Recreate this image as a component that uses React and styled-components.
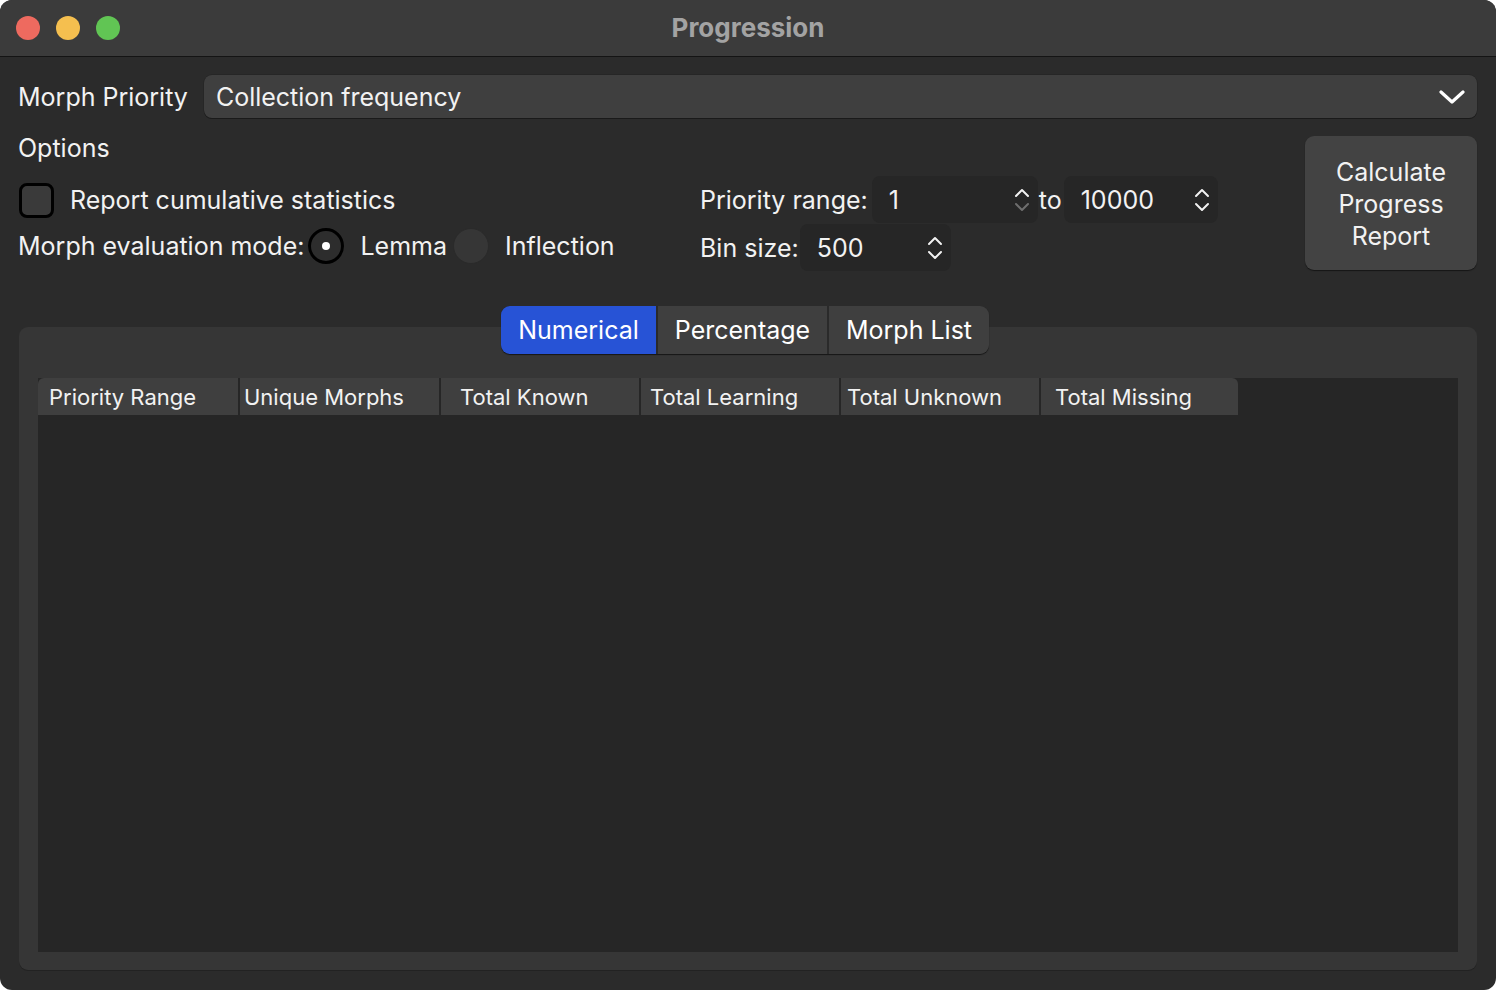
import * as React from "react";
import styled, { createGlobalStyle } from "styled-components";

const Global = createGlobalStyle`
  html, body {
    margin: 0;
    padding: 0;
    background: #ffffff;
  }
  * { box-sizing: border-box; }
`;

const Window = styled.div`
  width: 1496px;
  height: 990px;
  border-radius: 12px;
  overflow: hidden;
  background: #2b2b2b;
  display: flex;
  flex-direction: column;
  font-family: Inter, "Liberation Sans", sans-serif;
  color: #f2f2f2;
  font-size: 25px;
`;

const TitleBar = styled.div`
  height: 57px;
  flex: none;
  background: #3b3b3b;
  border-bottom: 1px solid #141414;
  display: grid;
  grid-template-columns: 1fr auto 1fr;
  align-items: center;
  padding: 0 16px;
`;

const Lights = styled.div`
  display: flex;
  gap: 16px;
`;

const Light = styled.span`
  width: 24px;
  height: 24px;
  border-radius: 50%;
  background: ${(p) => p.color};
`;

const Title = styled.div`
  font-weight: 700;
  font-size: 26px;
  color: #a3a3a3;
  padding-bottom: 2px;
`;

const Body = styled.div`
  flex: 1;
  display: flex;
  flex-direction: column;
  padding: 18px 19px 20px 18px;
`;

const PriorityRow = styled.div`
  display: flex;
  align-items: center;
  gap: 16px;
`;

const Label = styled.span`
  white-space: nowrap;
  line-height: 32px;
`;

const Dropdown = styled.div`
  flex: 1;
  height: 43px;
  background: #3f3f3f;
  border-radius: 8px;
  box-shadow: 0 1px 0 #1a1a1a, 0 0 0 0.5px #222;
  display: flex;
  align-items: center;
  justify-content: space-between;
  padding: 0 12px 0 12px;
`;

const OptionsArea = styled.div`
  display: flex;
  margin-top: 14px;
`;

const LeftCol = styled.div`
  width: 682px;
  display: flex;
  flex-direction: column;
`;

const CheckRow = styled.div`
  display: flex;
  align-items: center;
  margin-top: 19px;
  height: 34px;
  gap: 16px;
`;

const Checkbox = styled.span`
  width: 35px;
  height: 35px;
  border-radius: 8px;
  border: 3px solid #000;
  background: #3a3a3a;
  margin-left: 1px;
`;

const RadioRow = styled.div`
  display: flex;
  align-items: center;
  margin-top: 11px;
  height: 36px;
`;

const Radio = styled.span`
  width: 36px;
  height: 36px;
  border-radius: 50%;
  flex: none;
  display: flex;
  align-items: center;
  justify-content: center;
  background: ${(p) => (p.checked ? "#2d2d2d" : "#363636")};
  border: ${(p) => (p.checked ? "3px solid #000" : "1px solid #2a2a2a")};
  margin: ${(p) => (p.checked ? "0 16px 0 4px" : "0 16px 0 6px")};
  &::after {
    content: "";
    display: ${(p) => (p.checked ? "block" : "none")};
    width: 8px;
    height: 8px;
    border-radius: 50%;
    background: #fff;
  }
`;

const MidCol = styled.div`
  flex: 1;
  display: flex;
  flex-direction: column;
  gap: 1px;
  padding-top: 44px;
`;

const SpinRow = styled.div`
  display: flex;
  align-items: center;
  height: 47px;
`;

const SpinBox = styled.div`
  width: ${(p) => p.w}px;
  height: 47px;
  background: #262626;
  border-radius: 8px;
  display: flex;
  align-items: center;
  justify-content: space-between;
  padding: 0 8px 0 17px;
  margin-left: ${(p) => p.ml || 0}px;
`;

const Arrows = styled.div`
  display: flex;
  flex-direction: column;
  gap: 4px;
`;

const Calc = styled.div`
  width: 172px;
  height: 134px;
  margin-top: 4px;
  background: #434343;
  border-radius: 9px;
  box-shadow: 0 1px 1px #161616;
  display: flex;
  align-items: center;
  justify-content: center;
  text-align: center;
  line-height: 32px;
  padding-top: 2px;
`;

const TabArea = styled.div`
  flex: 1;
  display: flex;
  flex-direction: column;
  margin-top: 35px;
  padding-left: 1px;
`;

const TabBar = styled.div`
  display: flex;
  align-self: center;
  position: relative;
  z-index: 1;
  margin-right: 6px;
  border-radius: 9px;
  box-shadow: 0 1px 1px #161616;
  overflow: hidden;
  gap: 2px;
  background: #2a2a2a;
`;

const Tab = styled.div`
  height: 48px;
  width: ${(p) => p.w}px;
  display: flex;
  align-items: center;
  justify-content: center;
  background: ${(p) => (p.active ? "#2753d6" : "#3f3f3f")};
  color: #fff;
`;

const Pane = styled.div`
  flex: 1;
  margin-top: -27px;
  background: #363636;
  border-radius: 9px;
  box-shadow: 0 1px 0 #222;
  padding: 51px 19px 18px 19px;
  display: flex;
`;

const Table = styled.div`
  flex: 1;
  background: #262626;
  display: flex;
  flex-direction: column;
`;

const HeaderRow = styled.div`
  display: flex;
  gap: 2px;
  height: 37px;
`;

const HeadCell = styled.div`
  width: ${(p) => p.w}px;
  background: #3f3f3f;
  display: flex;
  align-items: center;
  padding-left: ${(p) => p.pad}px;
  font-size: 22px;
  white-space: nowrap;
  &:first-child { border-top-left-radius: 6px; }
  &:last-child { border-top-right-radius: 6px; }
`;

const Chevron = ({ up, dim }) => (
  <svg width="16" height="10" viewBox="0 0 16 10">
    <path
      d={up ? "M2 8 L8 2 L14 8" : "M2 2 L8 8 L14 2"}
      fill="none"
      stroke={dim ? "#6e6e6e" : "#f2f2f2"}
      strokeWidth="2"
      strokeLinecap="round"
      strokeLinejoin="round"
    />
  </svg>
);

const Spinner = ({ value, w, ml, dimDown }) => (
  <SpinBox w={w} ml={ml}>
    <span>{value}</span>
    <Arrows>
      <Chevron up />
      <Chevron dim={dimDown} />
    </Arrows>
  </SpinBox>
);

const columns = [
  { name: "Priority Range", w: 200, pad: 11 },
  { name: "Unique Morphs", w: 199, pad: 4 },
  { name: "Total Known", w: 198, pad: 19 },
  { name: "Total Learning", w: 198, pad: 9 },
  { name: "Total Unknown", w: 198, pad: 6 },
  { name: "Total Missing", w: 197, pad: 14 },
];

export default function App() {
  return (
    <>
      <Global />
      <Window>
        <TitleBar>
          <Lights>
            <Light color="#ee6a5f" />
            <Light color="#f5bf4f" />
            <Light color="#61c554" />
          </Lights>
          <Title>Progression</Title>
          <span />
        </TitleBar>
        <Body>
          <PriorityRow>
            <Label>Morph Priority</Label>
            <Dropdown>
              <span>Collection frequency</span>
              <svg width="26" height="16" viewBox="0 0 26 16">
                <path d="M2 3 L13 13 L24 3" fill="none" stroke="#fff" strokeWidth="3.2" strokeLinecap="round" strokeLinejoin="round" />
              </svg>
            </Dropdown>
          </PriorityRow>

          <OptionsArea>
            <LeftCol>
              <Label>Options</Label>
              <CheckRow>
                <Checkbox />
                <Label>Report cumulative statistics</Label>
              </CheckRow>
              <RadioRow>
                <Label>Morph evaluation mode:</Label>
                <Radio checked />
                <Label>Lemma</Label>
                <Radio />
                <Label>Inflection</Label>
              </RadioRow>
            </LeftCol>
            <MidCol>
              <SpinRow>
                <Label>Priority range:</Label>
                <Spinner value="1" w={166} ml={4} dimDown />
                <Label style={{ margin: "0 2px 0 1px" }}>to</Label>
                <Spinner value="10000" w={154} />
              </SpinRow>
              <SpinRow>
                <Label>Bin size:</Label>
                <Spinner value="500" w={151} ml={1} />
              </SpinRow>
            </MidCol>
            <Calc>
              Calculate
              <br />
              Progress
              <br />
              Report
            </Calc>
          </OptionsArea>

          <TabArea>
            <TabBar>
              <Tab w={155} active>Numerical</Tab>
              <Tab w={169}>Percentage</Tab>
              <Tab w={160}>Morph List</Tab>
            </TabBar>
            <Pane>
              <Table>
                <HeaderRow>
                  {columns.map((c) => (
                    <HeadCell key={c.name} w={c.w} pad={c.pad}>
                      {c.name}
                    </HeadCell>
                  ))}
                </HeaderRow>
              </Table>
            </Pane>
          </TabArea>
        </Body>
      </Window>
    </>
  );
}
